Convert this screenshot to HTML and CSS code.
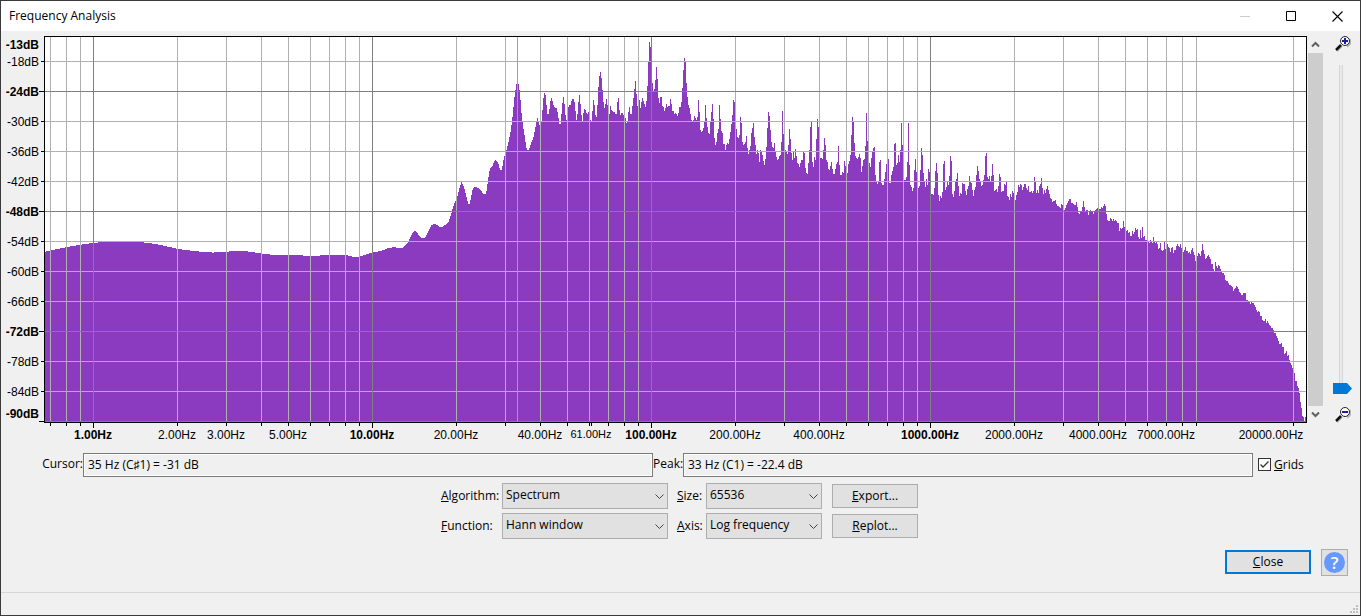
FILE: index.html
```html
<!DOCTYPE html>
<html lang="en">
<head>
<meta charset="utf-8">
<title>Frequency Analysis</title>
<link rel="stylesheet" href="styles.css">
</head>
<body>
<div class="window">
  <header class="titlebar">
    <h1 class="title">Frequency Analysis</h1>
    <div class="window-buttons">
      <button class="window-button" aria-label="Minimize" disabled><svg width="11" height="11" viewBox="0 0 11 11"><path d="M0 5.5H10" stroke="#ccc"/></svg></button>
      <button class="window-button" aria-label="Maximize"><svg width="11" height="11" viewBox="0 0 11 11"><path d="M.5 .5H9.500V9.500H.5Z" fill="none" stroke="#000"/></svg></button>
      <button class="window-button" aria-label="Close window"><svg width="11" height="11" viewBox="0 0 11 11"><path d="M.5 .5L10.500 10.500M10.500 .5L.5 10.500" stroke="#000" stroke-width="1.100"/></svg></button>
    </div>
  </header>

  <main class="content">
    <section class="plot-row">
      <svg class="plot" viewBox="4 36 1303 407" role="img" aria-label="Frequency spectrum">
        <g shape-rendering="crispEdges">
          <rect x="44" y="36" width="1263" height="387" fill="#000"/>
          <rect x="45" y="37" width="1261" height="385" fill="#fff"/>
          <g fill="#8b3bbf">
            <g transform="scale(.333333)"><path d="M135 1263V756H139V753H151V750H165V747H181V744H196V741H210V738H228V735H246V732H268V729H294V726H432V729H456V732H474V735H490V738H502V741H515V744H528V747H546V750H570V753H597V756H636V759H642V756H687V753H744V756H765V759H785V762H810V765H909V768H960V765H1020V1263Z"/></g>
            <g transform="translate(340 30) scale(.333333)"><path d="M0 1173V675H24V678H36V681H60V678H69V675H78V672H87V669H97V666H114V663H126V660H135V657H141V654H156V651H168V654H189V651H192V648H195V645H198V642H201V639H204V636H207V627H210V621H213V615H216V609H219V606H222V603H228V606H231V609H234V615H237V618H240V621H243V624H255V621H258V615H261V609H264V603H267V597H270V591H273V585H279V582H288V585H294V588H297V591H309V588H312V585H318V582H321V579H324V576H327V567H330V558H333V549H336V537H339V528H342V519H345V513H350V498H354V486H357V474H360V465H363V456H366V462H369V468H372V477H375V489H378V501H381V513H384V522H390V510H393V495H396V480H399V474H402V471H411V474H417V477H420V480H423V483H426V489H429V492H438V483H441V462H444V441H447V423H450V414H453V411H456V408H459V399H462V393H465V390H468V393H471V396H474V402H477V414H480V420H486V408H489V390H492V378H495V366H498V360H501V348H504V336H507V321H510V306H513V285H516V261H519V231H522V201H525V180H528V162H537V180H540V210H543V249H546V276H549V297H552V315H555V336H558V354H561V360H567V354H570V345H573V336H576V330H579V321H582V306H585V291H588V276H591V264H594V276H597V285H600V276H606V240H609V204H612V189H615V195H618V225H621V252H627V237H630V213H633V204H636V213H639V225H642V231H645V234H651V246H654V264H657V282H663V252H666V219H669V201H672V222H675V255H678V270H681V252H684V231H687V225H693V213H696V207H702V216H705V243H708V270H711V252H714V216H717V195H720V1173Z"/></g>
            <g transform="translate(560 30) scale(.333333)"><path d="M60 1173V222H63V255H66V273H69V249H72V237H75V240H78V249H81V252H84V246H87V270H93V273H96V243H99V210H102V225H105V255H108V261H111V225H114V171H117V138H120V126H123V144H126V180H129V216H132V234H135V222H138V207H141V225H144V249H147V252H150V228H153V240H156V243H159V246H165V252H171V216H174V204H177V240H180V255H183V249H189V255H192V264H198V279H201V273H204V246H207V231H210V252H216V228H219V204H222V177H225V153H228V192H231V228H237V210H240V234H243V216H246V204H249V213H252V222H255V231H258V213H261V168H264V96H267V36H270V51H273V105H276V159H279V183H282V177H285V150H288V111H291V147H294V204H297V219H300V201H306V228H309V231H312V243H315V234H318V222H321V231H324V228H330V207H333V222H336V243H342V252H345V249H348V252H351V258H354V249H357V231H363V216H366V174H369V120H372V84H375V96H378V159H381V201H384V225H387V234H390V252H393V270H396V273H399V270H402V258H405V264H408V270H411V261H414V210H417V246H420V300H423V306H426V303H429V294H432V273H435V225H438V264H441V291H444V309H447V312H450V273H453V246H456V222H459V267H462V324H465V345H468V336H471V309H474V297H477V225H480V267H483V303H486V309H489V342H495V360H498V345H501V339H504V342H507V327H510V306H513V282H516V255H519V210H522V216H525V270H528V297H531V321H534V324H537V315H540V261H543V279H546V336H549V345H552V342H555V336H558V318H561V354H564V372H567V360H570V348H573V309H576V294H579V279H582V321H585V345H588V372H591V360H594V369H597V396H600V1173Z"/></g>
            <g transform="translate(740 70) scale(.333333)"><path d="M60 1053V240H63V246H66V255H69V273H72V285H75V267H78V231H81V174H84V126H87V138H90V180H93V216H96V231H99V234H102V219H105V246H108V261H111V270H114V267H117V258H120V255H123V216H126V123H129V192H132V240H138V246H141V252H144V225H147V177H150V207H153V249H156V270H159V246H162V264H165V237H168V258H171V279H174V282H177V291H180V279H183V270H189V246H192V249H195V294H198V309H201V312H204V279H207V240H210V171H213V156H216V276H219V291H222V261H225V270H228V207H231V147H234V171H237V264H246V267H249V240H252V204H255V225H258V270H261V276H264V297H267V300H270V288H273V276H276V297H279V312H285V297H288V282H291V276H294V228H297V285H300V315H306V306H309V309H312V273H315V288H318V309H324V282H327V273H330V255H333V195H336V141H339V156H342V219H345V258H348V264H351V267H354V261H357V252H360V264H363V306H366V288H369V270H372V267H375V228H378V129H381V213H384V246H387V279H390V291H393V264H396V246H399V234H402V231H405V315H408V333H411V342H414V336H417V276H420V270H423V339H426V345H432V327H435V306H438V282H441V333H444V267H447V339H453V315H456V303H459V291H462V222H465V219H468V285H471V279H474V255H477V276H480V240H483V159H486V225H489V330H498V321H501V276H504V159H507V285H510V345H513V351H516V363H519V354H522V300H525V267H528V306H531V354H537V348H540V300H543V234H546V255H549V309H552V336H555V351H558V327H561V345H564V297H567V306H570V372H579V375H582V354H585V303H588V279H591V309H594V375H597V393H600V1053Z"/></g>
            <g transform="translate(920 120) scale(.333333)"><path d="M60 903V228H63V234H66V216H69V132H72V123H75V210H78V201H81V186H84V195H87V168H90V108H93V123H96V222H99V231H102V213H105V186H108V177H111V159H114V198H117V228H120V219H123V222H126V189H129V192H135V213H138V225H141V207H144V198H147V168H150V186H153V189H156V210H159V228H162V210H165V201H168V165H171V138H174V153H177V177H180V186H183V198H186V195H189V180H192V165H195V108H198V99H201V171H204V177H207V168H210V183H213V168H216V132H219V165H222V213H225V210H228V207H231V216H234V198H237V162H240V171H243V216H246V213H252V192H255V195H258V186H261V228H264V231H267V240H270V222H273V231H276V213H279V219H282V240H288V225H291V216H294V195H297V201H300V192H303V195H306V210H309V201H312V192H318V204H321V210H324V198H327V216H333V213H336V219H339V213H342V171H345V186H348V219H351V210H354V219H357V198H360V192H363V174H366V204H369V222H372V210H375V219H378V207H381V198H384V210H387V222H390V234H393V237H396V246H399V243H405V240H408V252H411V258H417V261H420V264H423V252H426V255H429V270H435V264H438V255H441V249H444V243H447V237H453V249H459V252H462V255H468V246H471V261H474V279H477V282H480V276H486V261H489V243H492V261H495V273H498V270H504V285H507V276H510V270H513V276H519V282H522V276H525V270H528V267H531V264H537V267H543V261H546V264H549V258H552V252H555V258H558V282H561V300H564V303H570V294H573V297H576V303H579V297H582V303H585V300H588V303H591V309H597V333H600V324H603V327H606V324H609V303H612V321H615V333H621V330H624V339H627V336H630V348H636V333H639V342H642V336H645V324H648V330H651V327H654V351H657V357H660V330H663V354H666V321H669V351H672V348H675V360H684V366H687V369H690V360H693V366H696V369H699V351H702V366H705V369H708V366H711V372H714V387H717V384H720V903Z"/></g>
            <g transform="translate(1120 180) scale(.333333)"><path d="M120 723V189H123V210H126V213H129V210H132V186H135V207H138V192H144V201H147V204H150V216H153V204H156V201H159V219H162V210H168V198H171V192H174V198H177V201H180V192H183V204H189V216H192V210H195V201H198V213H204V219H207V216H210V222H213V210H216V204H219V216H222V225H225V243H228V228H234V219H237V222H240V228H243V213H246V192H249V210H252V222H255V237H258V234H261V228H264V225H267V231H270V237H273V252H279V267H282V273H285V246H288V258H291V264H294V255H297V258H300V267H303V273H306V279H312V285H315V300H318V303H324V309H327V315H333V318H336V321H339V333H342V327H345V324H348V318H351V321H354V327H357V336H360V339H363V345H369V339H378V360H384V366H390V372H393V366H396V369H402V375H405V381H408V390H411V396H414V393H417V396H420V408H426V420H429V423H435V417H438V429H441V423H444V429H447V435H450V438H453V444H459V450H462V459H468V468H471V474H474V483H477V492H483V489H486V501H492V522H495V519H498V513H501V528H504V525H507V540H510V549H513V555H516V564H519V567H522V579H525V603H531V618H534V624H537V639H540V666H543V684H546V708H549V711H552V723H555V711H558V723Z"/></g>
          </g>
          <path fill="none" stroke="#b0b0b0" d="M45 61.500H1306M45 121.500H1306M45 151.500H1306M45 181.500H1306M45 241.500H1306M45 271.500H1306M45 301.500H1306M45 361.500H1306M45 391.500H1306M50.500 37V421M66.500 37V421M80.500 37V421M177.500 37V421M226.500 37V421M261.500 37V421M288.500 37V421M310.500 37V421M329.500 37V421M345.500 37V421M359.500 37V421M456.500 37V421M505.500 37V421M540.500 37V421M567.500 37V421M589.500 37V421M608.500 37V421M624.500 37V421M638.500 37V421M735.500 37V421M784.500 37V421M819.500 37V421M846.500 37V421M868.500 37V421M887.500 37V421M903.500 37V421M917.500 37V421M1014.500 37V421M1063.500 37V421M1098.500 37V421M1125.500 37V421M1147.500 37V421M1166.500 37V421M1182.500 37V421M1196.500 37V421M1293.500 37V421"/>
          <path fill="none" stroke="#a0a0a0" d="M517.500 37V421"/>
          <path fill="none" stroke="#808080" d="M45 91.500H1306M45 211.500H1306M45 331.500H1306M45 421.500H1306M93.500 37V421M372.500 37V421M651.500 37V421M930.500 37V421"/>
          <path fill="none" stroke="#000" d="M41 61.500H44M39 91.500H44M41 121.500H44M41 151.500H44M41 181.500H44M39 211.500H44M41 241.500H44M41 271.500H44M41 301.500H44M39 331.500H44M41 361.500H44M41 391.500H44M39 421.500H44M50.500 423V426M66.500 423V426M80.500 423V426M93.500 423V428M177.500 423V426M226.500 423V426M261.500 423V426M288.500 423V426M310.500 423V426M329.500 423V426M345.500 423V426M359.500 423V426M372.500 423V428M456.500 423V426M505.500 423V426M540.500 423V426M567.500 423V426M589.500 423V426M591.500 423V426M608.500 423V426M624.500 423V426M638.500 423V426M651.500 423V428M735.500 423V426M784.500 423V426M819.500 423V426M846.500 423V426M868.500 423V426M887.500 423V426M903.500 423V426M917.500 423V426M930.500 423V428M1014.500 423V426M1063.500 423V426M1098.500 423V426M1125.500 423V426M1147.500 423V426M1166.500 423V426M1182.500 423V426M1196.500 423V426M1293.500 423V426"/>
        </g>
        <g class="level-labels">
          <text class="major" x="39" y="49">-13dB</text>
          <text x="39" y="66">-18dB</text>
          <text class="major" x="39" y="96">-24dB</text>
          <text x="39" y="126">-30dB</text>
          <text x="39" y="156">-36dB</text>
          <text x="39" y="186">-42dB</text>
          <text class="major" x="39" y="216">-48dB</text>
          <text x="39" y="246">-54dB</text>
          <text x="39" y="276">-60dB</text>
          <text x="39" y="306">-66dB</text>
          <text class="major" x="39" y="336">-72dB</text>
          <text x="39" y="366">-78dB</text>
          <text x="39" y="396">-84dB</text>
          <text class="major" x="39" y="418">-90dB</text>
        </g>
        <g class="hz-labels">
          <text class="major" x="93" y="439">1.00Hz</text>
          <text x="177" y="439">2.00Hz</text>
          <text x="226" y="439">3.00Hz</text>
          <text x="288" y="439">5.00Hz</text>
          <text class="major" x="372" y="439">10.00Hz</text>
          <text x="456" y="439">20.00Hz</text>
          <text x="540" y="439">40.00Hz</text>
          <text class="small" x="591" y="438">61.00Hz</text>
          <text class="major" x="651" y="439">100.00Hz</text>
          <text x="735" y="439">200.00Hz</text>
          <text x="819" y="439">400.00Hz</text>
          <text class="major" x="930" y="439">1000.00Hz</text>
          <text x="1014" y="439">2000.00Hz</text>
          <text x="1098" y="439">4000.00Hz</text>
          <text x="1166" y="439">7000.00Hz</text>
          <text x="1271" y="439">20000.00Hz</text>
        </g>
      </svg>

      <div class="scrollbar">
        <button class="scroll-arrow" aria-label="Scroll up"><svg width="9" height="7" viewBox="0 0 9 7"><path d="M1 5.500L4.500 2L8 5.500" fill="none" stroke="#606060" stroke-width="2"/></svg></button>
        <div class="scroll-thumb"></div>
        <button class="scroll-arrow" aria-label="Scroll down"><svg width="9" height="7" viewBox="0 0 9 7"><path d="M1 1.500L4.500 5L8 1.500" fill="none" stroke="#606060" stroke-width="2"/></svg></button>
      </div>

      <div class="zoom">
        <svg width="16" height="16" viewBox="0 0 16 16"><path d="M2 15L7 10M14.500 3Q17 8 12 10.500" stroke="#b4b4b4" stroke-width="2" fill="none"/><path d="M1 14L6 9" stroke="#111" stroke-width="2.500"/><circle cx="10" cy="5" r="4.500" fill="#fff" stroke="#222"/><path d="M7 5H13M10 2V8" stroke="#1a1aa6" stroke-width="2"/></svg>
        <input class="zoom-slider" type="range" min="0" max="100" value="0" aria-label="Vertical zoom">
        <svg width="16" height="16" viewBox="0 0 16 16"><path d="M2 15L7 10M14.500 3Q17 8 12 10.500" stroke="#b4b4b4" stroke-width="2" fill="none"/><path d="M1 14L6 9" stroke="#111" stroke-width="2.500"/><circle cx="10" cy="5" r="4.500" fill="#fff" stroke="#222"/><path d="M7 5H13" stroke="#1a1aa6" stroke-width="2"/></svg>
      </div>
    </section>

    <section class="readout">
      <label class="readout-label" for="cursor">Cursor:</label>
      <input class="readout-field" id="cursor" type="text" readonly value="35 Hz (C♯1) = -31 dB">
      <label class="peak-label" for="peak">Peak:</label>
      <input class="readout-field" id="peak" type="text" readonly value="33 Hz (C1) = -22.4 dB">
      <div class="grids">
        <input class="check" id="grids" type="checkbox" checked>
        <svg class="check-mark" width="13" height="13" viewBox="0 0 13 13"><path d="M2.500 6.500L5 9L10.500 3.500" fill="none" stroke="#333" stroke-width="1.300"/></svg>
        <label for="grids"><u>G</u>rids</label>
      </div>
    </section>

    <section class="options">
      <label for="algorithm"><u>A</u>lgorithm:</label>
      <div class="dropdown"><select id="algorithm"><option>Spectrum</option></select><svg class="chevron" width="9" height="6" viewBox="0 0 9 6"><path d="M.5 .5L4.500 4.500L8.500 .5" fill="none" stroke="#444"/></svg></div>
      <label class="second" for="size"><u>S</u>ize:</label>
      <div class="dropdown"><select id="size"><option>65536</option></select><svg class="chevron" width="9" height="6" viewBox="0 0 9 6"><path d="M.5 .5L4.500 4.500L8.500 .5" fill="none" stroke="#444"/></svg></div>
      <button class="push" type="button"><u>E</u>xport...</button>

      <label for="function"><u>F</u>unction:</label>
      <div class="dropdown"><select id="function"><option>Hann window</option></select><svg class="chevron" width="9" height="6" viewBox="0 0 9 6"><path d="M.5 .5L4.500 4.500L8.500 .5" fill="none" stroke="#444"/></svg></div>
      <label class="second" for="axis"><u>A</u>xis:</label>
      <div class="dropdown"><select id="axis"><option>Log frequency</option></select><svg class="chevron" width="9" height="6" viewBox="0 0 9 6"><path d="M.5 .5L4.500 4.500L8.500 .5" fill="none" stroke="#444"/></svg></div>
      <button class="push" type="button"><u>R</u>eplot...</button>
    </section>

    <section class="actions">
      <button class="push push-default" type="button"><u>C</u>lose</button>
      <button class="help" type="button" aria-label="Help"><span class="help-mark">?</span></button>
    </section>
  </main>

  <footer class="statusbar">
    <svg width="9" height="9" viewBox="0 0 9 9" fill="#bfbfbf" shape-rendering="crispEdges"><path d="M6 0H8V2H6ZM3 3H5V5H3ZM6 3H8V5H6ZM0 6H2V8H0ZM3 6H5V8H3ZM6 6H8V8H6Z"/></svg>
  </footer>
</div>
</body>
</html>
```
FILE: styles.css
```css
* { box-sizing: border-box; }

body {
  margin: 0;
  color: #000;
  font: 12px/16px "Open Sans", "Noto Sans", sans-serif;
}

button, input, select {
  margin: 0;
  color: inherit;
  font: inherit;
}

svg { display: block; }

.window {
  display: flex;
  flex-direction: column;
  min-height: 100vh;
  border: 1px solid #3a3a3c;
  background: #f0f0f0;
}

.titlebar {
  display: flex;
  align-items: center;
  justify-content: space-between;
  height: 30px;
  padding-left: 8px;
  background: #fff;
}

.title {
  margin: 0;
  font-size: 12px;
  font-weight: 400;
}

.window-buttons { display: flex; }

.window-button {
  display: grid;
  place-items: center;
  width: 46px;
  height: 29px;
  padding: 0;
  border: 0;
  background: none;
}

.content {
  flex: 1;
  padding-top: 5px;
}

.plot-row {
  display: flex;
  padding: 0 5px 0 3px;
}

.plot {
  flex: 1;
  min-width: 0;
  height: auto;
}

.level-labels, .hz-labels {
  font: 12px "Liberation Sans", Arial, sans-serif;
}

.level-labels { text-anchor: end; }
.hz-labels { text-anchor: middle; }
.major { font-weight: 700; }
.small { font-size: 11px; }

.scrollbar {
  display: flex;
  flex-direction: column;
  width: 15px;
  margin: 0 0 20px 1px;
}

.scroll-arrow {
  display: grid;
  place-items: center;
  height: 17px;
  padding: 0;
  border: 0;
  background: none;
}

.scroll-thumb {
  flex: 1;
  background: #cdcdcd;
}

.zoom {
  display: flex;
  flex-direction: column;
  align-items: center;
  width: 32px;
  padding-left: 7px;
  margin-bottom: 20px;
}

.zoom-slider {
  flex: 1;
  width: 19px;
  min-height: 0;
  margin: 13px 0;
  appearance: none;
  writing-mode: vertical-lr;
  direction: rtl;
  background: linear-gradient(90deg, #d6d6d6 1px, #e7eaea 1px 3px, #d6d6d6 3px) 6px 0 / 4px 100% no-repeat;
}

.zoom-slider::-webkit-slider-thumb {
  appearance: none;
  width: 19px;
  height: 11px;
  background: #0078d7;
  clip-path: polygon(0 0, 14px 0, 100% 50%, 14px 100%, 0 100%);
}

.readout {
  display: flex;
  align-items: center;
  padding: 10px 50px 0 40px;
}

.readout-label, .peak-label {
  flex: none;
  padding-bottom: 2px;
  text-align: right;
  white-space: nowrap;
}

.readout-label { width: 42px; }
.peak-label { width: 30px; }

.readout-field {
  flex: 1;
  min-width: 0;
  height: 24px;
  padding: 0 4px 2px;
  border: 1px solid #7a7a7a;
  outline: 0;
  background: #f0f0f0;
  box-shadow: inset 0 0 0 1px #fff;
}

.grids {
  display: flex;
  position: relative;
  align-items: center;
  gap: 3px;
  width: 57px;
  padding: 0 0 1px 5px;
}

.check {
  width: 13px;
  height: 13px;
  border: 1px solid #333;
  appearance: none;
  background: #fff;
}

.check-mark {
  position: absolute;
  left: 5px;
  visibility: hidden;
  pointer-events: none;
}

.check:checked + .check-mark { visibility: visible; }

.options {
  display: grid;
  grid-template-columns: 61px 166px 38px 116px 96px;
  gap: 4px 0;
  align-items: center;
  justify-content: center;
  padding: 6px 2px 0 0;
}

.second { padding-left: 9px; }

.dropdown { position: relative; }

.dropdown select {
  display: block;
  width: 100%;
  height: 26px;
  padding: 0 20px 2px 3px;
  border: 1px solid #adadad;
  border-radius: 0;
  appearance: none;
  background: #e1e1e1;
}

.chevron {
  position: absolute;
  top: 11px;
  right: 4px;
  pointer-events: none;
}

.push {
  width: 86px;
  height: 24px;
  padding: 0 0 1px;
  border: 1px solid #adadad;
  background: #e1e1e1;
}

.options .push { justify-self: end; }
.push-default { border: 2px solid #0078d7; }

.actions {
  display: flex;
  align-items: flex-start;
  justify-content: flex-end;
  gap: 10px;
  padding: 10px 12px 16px 0;
}

.actions .push { margin-top: 1px; }

.help {
  display: grid;
  place-items: center;
  width: 27px;
  height: 27px;
  padding: 0;
  border: 1px solid #adadad;
  background: #e1e1e1;
}

.help-mark {
  width: 21px;
  height: 21px;
  border-radius: 50%;
  background: #6699ff;
  color: #fff;
  font-size: 17px;
  font-weight: 600;
  line-height: 21px;
}

.statusbar {
  display: flex;
  align-items: flex-end;
  justify-content: flex-end;
  height: 23px;
  padding: 0 1px 1px;
  border-top: 1px solid #d7d7d7;
}
```
